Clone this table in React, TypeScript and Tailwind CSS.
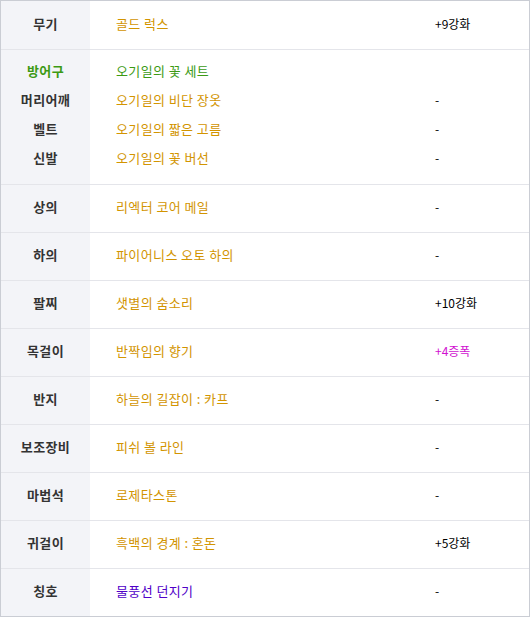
import React from "react";

type Row = { label: string; item: string; right: string; itemColor?: string; rightColor?: string };

const rows: Row[] = [
  { label: "상의", item: "리엑터 코어 메일", right: "-" },
  { label: "하의", item: "파이어니스 오토 하의", right: "-" },
  { label: "팔찌", item: "샛별의 숨소리", right: "+10강화" },
  { label: "목걸이", item: "반짝임의 향기", right: "+4증폭", rightColor: "text-[#d010d0]" },
  { label: "반지", item: "하늘의 길잡이 : 카프", right: "-" },
  { label: "보조장비", item: "피쉬 볼 라인", right: "-" },
  { label: "마법석", item: "로제타스톤", right: "-" },
  { label: "귀걸이", item: "흑백의 경계 : 혼돈", right: "+5강화" },
  { label: "칭호", item: "물풍선 던지기", right: "-", itemColor: "text-[#5000c8]" },
];

const font = { fontFamily: '"Noto Sans CJK KR", "Noto Sans", sans-serif' };

export default function App() {
  return (
    <div className="w-[531px] h-[617px] bg-white" style={font}>
      <div className="w-[530px] border border-[#cacdd4] text-[13px] tracking-[0.4px]">
        {/* 무기 */}
        <div className="flex h-[49px] border-b border-[#e4e5ea] pb-[2px]">
          <div className="w-[89px] bg-[#f3f4f8] flex items-center justify-center font-bold text-[#333] -mb-[2px] pb-[2px]">무기</div>
          <div className="w-[344px] pl-[26px] flex items-center text-[#d29400]">골드 럭스</div>
          <div className="flex-1 flex items-center pl-px text-black tracking-normal text-[12px]">+9강화</div>
        </div>
        {/* 방어구 group */}
        <div className="flex h-[135px] border-b border-[#e4e5ea]">
          <div className="w-[89px] bg-[#f3f4f8] flex flex-col items-center pt-[6px] leading-[29px] font-bold text-[#333]">
            <span className="text-[#3c9a14]">방어구</span>
            <span>머리어깨</span>
            <span>벨트</span>
            <span>신발</span>
          </div>
          <div className="w-[344px] pl-[26px] flex flex-col pt-[6px] leading-[29px] text-[#d29400]">
            <span className="text-[#3c9a14]">오기일의 꽃 세트</span>
            <span>오기일의 비단 장옷</span>
            <span>오기일의 짧은 고름</span>
            <span>오기일의 꽃 버선</span>
          </div>
          <div className="flex-1 flex flex-col pt-[6px] leading-[29px] pl-px text-black tracking-normal text-[12px]">
            <span>&nbsp;</span>
            <span>-</span>
            <span>-</span>
            <span>-</span>
          </div>
        </div>
        {rows.map((r, i) => (
          <div
            key={r.label}
            className={
              i === rows.length - 1
                ? "flex h-[47px]"
                : "flex h-[48px] border-b border-[#e4e5ea]"
            }
          >
            <div className="w-[89px] bg-[#f3f4f8] flex items-center justify-center font-bold text-[#333] pb-[3px]">{r.label}</div>
            <div className={`w-[344px] pl-[26px] flex items-center pb-[3px] ${r.itemColor ?? "text-[#d29400]"}`}>{r.item}</div>
            <div className={`flex-1 flex items-center pl-px pb-[3px] tracking-normal text-[12px] ${r.rightColor ?? "text-black"}`}>{r.right}</div>
          </div>
        ))}
      </div>
    </div>
  );
}
